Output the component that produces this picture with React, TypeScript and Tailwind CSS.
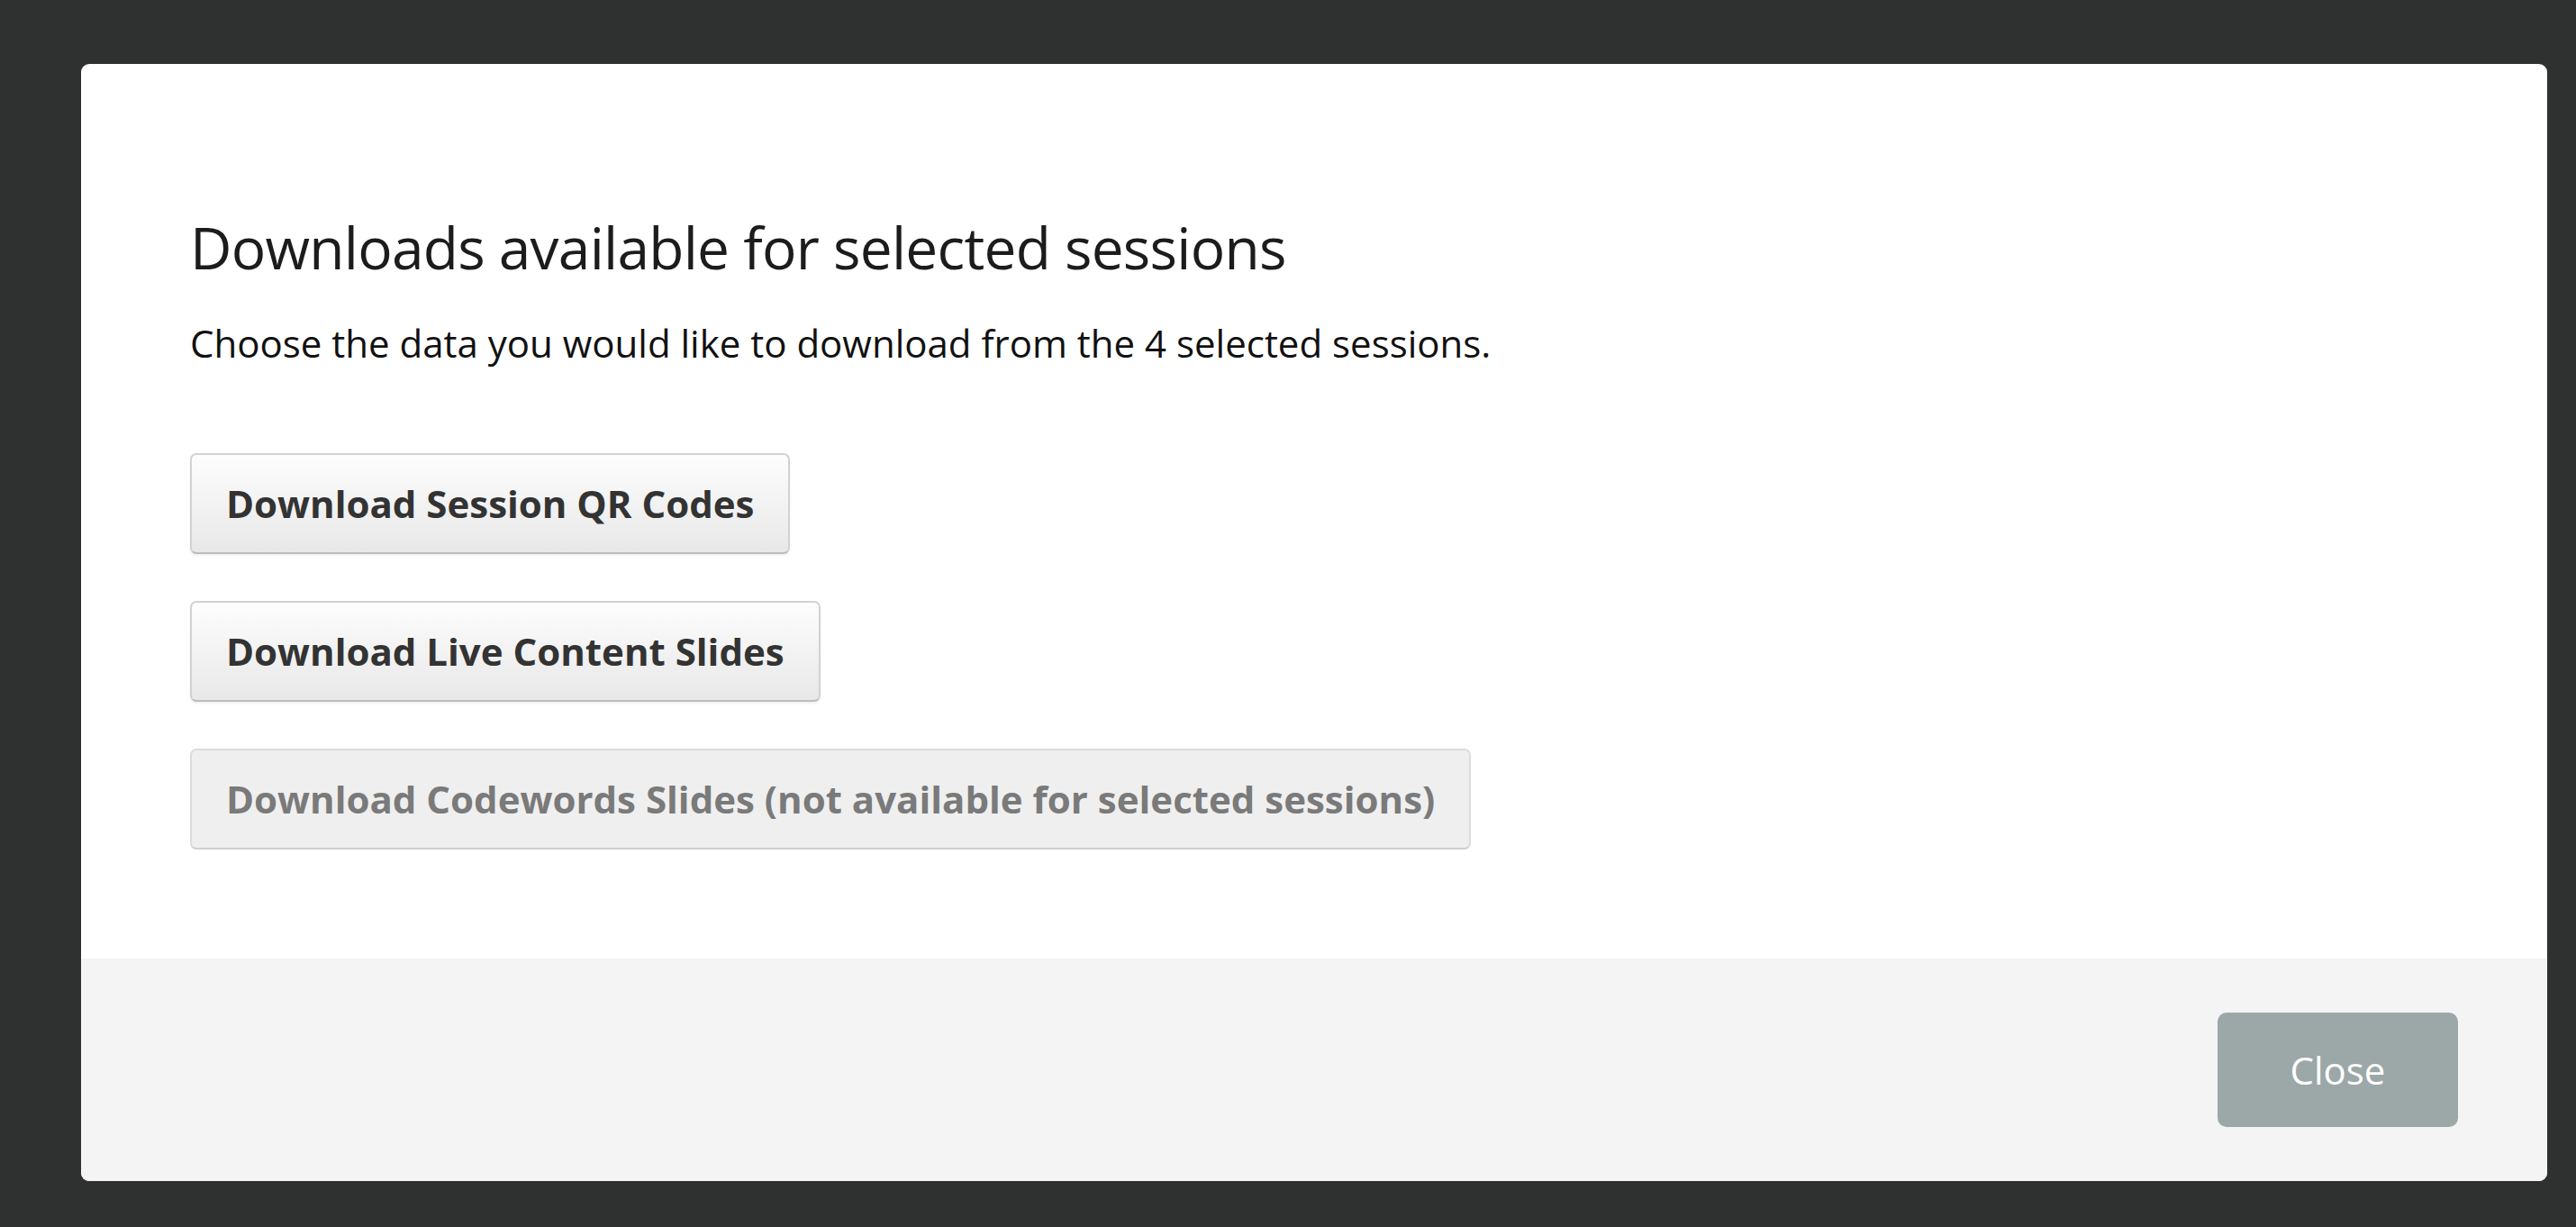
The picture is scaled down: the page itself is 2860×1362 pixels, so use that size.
export default function App() {
  const font = { fontFamily: '"Open Sans", "Noto Sans", sans-serif' };

  return (
    <div className="min-h-[1362px] w-[2860px] bg-[#2f3030] pt-[71px] pl-[90px]" style={font}>
      <div className="flex h-[1240px] w-[2738px] flex-col overflow-hidden rounded-[9px] bg-white">
        {/* body */}
        <div className="flex flex-1 flex-col pl-[121px] pt-[166px]">
          <h1 className="text-[64px] leading-[76px] font-normal tracking-[-0.75px] text-[#1c1c1c]">
            Downloads available for selected sessions
          </h1>
          <p className="mt-[43px] text-[42px] leading-[50px] text-[#111]">
            Choose the data you would like to download from the 4 selected sessions.
          </p>

          <div className="mt-[97px] flex flex-col items-start gap-[52px]">
            <button className="inline-flex h-[112px] items-center rounded-[7px] border-2 border-[#d2d2d2] border-b-[#bcbcbc] bg-gradient-to-b from-[#fdfdfd] to-[#e8e8e8] px-[38px] text-[42px] leading-[50px] font-bold text-[#333] shadow-[0_2px_3px_rgba(0,0,0,0.06)]">
              Download Session QR Codes
            </button>
            <button className="inline-flex h-[112px] items-center rounded-[7px] border-2 border-[#d2d2d2] border-b-[#bcbcbc] bg-gradient-to-b from-[#fdfdfd] to-[#e8e8e8] px-[38px] text-[42px] leading-[50px] font-bold text-[#333] shadow-[0_2px_3px_rgba(0,0,0,0.06)]">
              Download Live Content Slides
            </button>
            <button
              disabled
              className="inline-flex h-[112px] items-center rounded-[7px] border-2 border-[#dcdcdc] border-b-[#cfcfcf] bg-[#efefef] px-[38px] text-[42px] leading-[50px] font-bold text-[#7a7a7a]"
            >
              Download Codewords Slides (not available for selected sessions)
            </button>
          </div>
        </div>

        {/* footer */}
        <div className="flex h-[247px] items-center justify-end bg-[#f4f4f4] pr-[99px]">
          <button className="flex h-[127px] w-[267px] items-center justify-center rounded-[10px] bg-[#9ca7a8] text-[42px] leading-[50px] text-white">
            Close
          </button>
        </div>
      </div>
    </div>
  );
}
